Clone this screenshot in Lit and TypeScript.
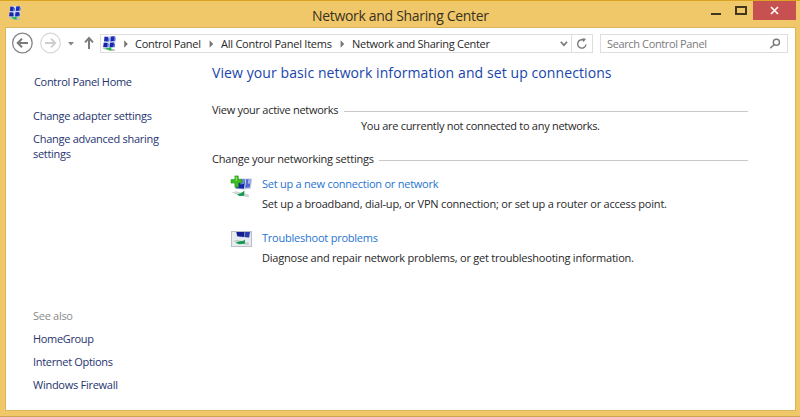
import { LitElement, html, svg, css } from "lit";
import { customElement, property } from "lit/decorators.js";

/** One line of text whose tracking is adjusted so that it spans a given width. */
@customElement("ui-text")
class UiText extends LitElement {
  @property({ type: Number }) span = 0;
  @property() text = "";
  static styles = css`
    :host { display: block; flex: none; white-space: nowrap; }
    .run { display: inline-block; }
  `;
  firstUpdated() {
    const run = this.renderRoot.querySelector(".run") as HTMLElement;
    const natural = run.getBoundingClientRect().width;
    run.style.letterSpacing = (this.span - natural) / (this.text.length - 1) + "px";
    this.style.width = this.span + "px";
  }
  render() {
    return html`<span class="run">${this.text}</span>`;
  }
}

const t = (text: string, span: number, cls = "") =>
  html`<ui-text class=${cls} .text=${text} .span=${span}></ui-text>`;

const networkIcon = svg`
  <path d="M2.4 .3 12.9 .2 12.2 11 1 11.2Z" fill="#cdd8f3"/>
  <path d="M2.3 .6 5.9 .9 5.4 5.2 1.9 4.9Z" fill="#1d2cb4"/>
  <path d="M8.2 .5 11.9 .3 11.4 4.8 7.8 5.1Z" fill="#1d2cb4"/>
  <path d="M1.6 6.3 5.4 6.6 4.9 10.6 1.1 10.2Z" fill="#1624a8"/>
  <path d="M7.5 6.3 11.3 6 10.8 10.2 7 10.6Z" fill="#1a29b0"/>
  <path d="M5.9 2 7 2 6.6 5.1 5.6 5ZM11.7 1.8 12.8 1.6 12.3 4.8 11.4 4.8ZM5.3 7.6 6.3 7.5 5.9 10.6 5 10.5ZM11.1 7.3 12.2 7.2 11.7 10.3 10.8 10.2Z" fill="#4a62d2"/>
  <path d="M0 11.3 4 11.3 12.2 12.6 11.8 14 8 14 2.8 12.7Z" fill="#b5c2b9"/>
  <path d="M3 11.6 6 11.2 8.6 10.2 8.8 13.6 6.2 13.2Z" fill="#1fb84a"/>`;

@customElement("app-root")
class AppRoot extends LitElement {
  static styles = css`
    :host {
      display: block; width: 800px; height: 417px; box-sizing: border-box;
      font: 11px/16px "Open Sans", "Noto Sans", sans-serif; color: #282828;
      background: #f0c869; border-top: 1px solid #d9a520; border-bottom: 1px solid #c9a650;
      overflow: hidden;
    }
    svg { display: block; flex: none; }
    .titlebar { display: grid; grid-template-columns: 312px 177px 1fr; height: 26px; }
    .app-icon { margin: 5px 0 0 8px; }
    .title { font-size: 14px; line-height: 20px; margin-top: 5px; color: #3a3120; }
    .buttons { display: flex; justify-content: flex-end; padding-right: 4px; }
    .min { width: 10px; height: 2px; background: #40371f; margin: 12px 14px 0 0; }
    .max { width: 8px; height: 5px; border: 2px solid #40371f; margin: 5px 6px 0 0; }
    .close { width: 43px; height: 19px; background: #c75050; display: flex; justify-content: center; align-items: center; }
    .window {
      width: 789px; height: 382px; margin-left: 5px; background: #fff; border: 1px solid #dcb65d;
      box-sizing: content-box; overflow: hidden;
    }
    .nav { display: flex; height: 19px; margin-top: 6px; }
    .history { width: 94px; margin-top: -2px; height: 22px; }
    .address {
      box-sizing: border-box; width: 493px; height: 19px; border: 1px solid #dedede;
      display: flex; align-items: center;
    }
    .address .pic { margin-left: 1px; }
    .arrow { width: 20px; }
    .chev { margin-left: auto; width: 20px; }
    .refresh { width: 20px; height: 17px; border-left: 1px solid #dedede; display: flex; align-items: center; justify-content: center; }
    .search {
      box-sizing: border-box; width: 188px; height: 19px; border: 1px solid #dedede; margin-left: 7px;
      display: flex; justify-content: space-between; align-items: center; padding: 0 6px; color: #7a7a7a;
    }
    .body { display: grid; grid-template-columns: 179px 536px; column-gap: 27px; height: 356px; }
    .side { display: flex; flex-direction: column; padding: 21px 0 0 27px; color: #26346e; }
    .side .home { margin-left: 1px; }
    .gap-home { margin-top: 18px; }
    .gap { margin-top: 7px; }
    .wrap { margin-top: -1px; }
    .also { margin-top: 146px; color: #8a8a8a; }
    .main { padding-top: 10px; }
    .heading { font-size: 14px; line-height: 20px; color: #1745ad; }
    .section { display: flex; gap: 5px; align-items: center; height: 16px; }
    .section.first { margin-top: 19px; }
    .section.second { margin-top: 17px; }
    .rule { flex: 1; height: 1px; background: #c9c9c9; margin-top: 2px; }
    .status { margin-left: 149px; }
    .task { display: grid; grid-template-columns: 50px 1fr; height: 54px; }
    .task.first { margin-top: 9px; }
    .task-icon { margin: -1px 0 0 18px; }
    .link { color: #1f74d0; margin-bottom: 4px; }
  `;

  renderHistory() {
    return html`<svg class="history" width="94" height="22" viewBox="0 0 94 22" fill="none">
      <circle cx="16.4" cy="11" r="9.8" stroke="#858585" stroke-width="1.3"/>
      <path d="M22 11H12M16 6.7 11.7 11 16 15.3" stroke="#7a7a7a" stroke-width="2"/>
      <circle cx="44.5" cy="11" r="9.8" stroke="#d6d6d6" stroke-width="1.2"/>
      <path d="M39 11H49M45 6.7 49.3 11 45 15.3" stroke="#cecece" stroke-width="1.8"/>
      <path d="M62 10H68L65 13.4Z" fill="#858585"/>
      <path d="M83 17V6.5M79 10.4 83 6 87 10.4" stroke="#7c7c7c" stroke-width="2"/>
    </svg>`;
  }

  renderArrow() {
    return html`<svg class="arrow" width="20" height="10" viewBox="0 0 20 10"><path d="M8.6 1.3 12.2 5 8.6 8.7Z" fill="#757575"/></svg>`;
  }

  renderConnectionIcon() {
    return html`<svg class="task-icon" width="23" height="24" viewBox="0 0 23 24">
      <path d="M13 3.6 22.3 3.6 20.8 13.8 13 14.4Z" fill="#c3cee6"/>
      <path d="M15.5 4.3 20.9 4.3 19.7 12.4 15 12.8Z" fill="#5368cc"/>
      <path d="M18.4 4.3 20.9 4.3 20.3 8.5 17.8 8.7Z" fill="#a9b8ea"/>
      <path d="M6 4 16.2 3.6 14.9 14.6 5 14.2Z" fill="#dbe3ee"/>
      <path d="M6.6 4.8 15.2 4.4 14 13.8 5.8 13.2Z" fill="#1425a8"/>
      <path d="M10.8 4.6 15.2 4.4 14.6 8.8 10.3 9.6Z" fill="#6d84de"/>
      <path d="M1.5 17.6 6 16.2 19 19.6 18.6 22.6 13.5 21.2 7 19.6Z" fill="#cfd6d4"/>
      <path d="M7 19.4 10.6 18.2 14.4 15.8 14.2 20.8 9.4 21Z" fill="#149b51"/>
      <path d="M4.9 .9H8.3V4.3H11.9V7.9H8.5V12.2H4.9V8.1H1V4.5H4.9Z" fill="#3abc23" stroke="#249417" stroke-width=".6"/>
      <path d="M5.7 1.8H7.1V6H5.7Z" fill="#86e25d"/>
    </svg>`;
  }

  renderTroubleshootIcon() {
    return html`<svg class="task-icon" width="23" height="20" viewBox="0 0 23 20">
      <rect x="1.5" y="2.5" width="20" height="15" fill="#e9ecef" stroke="#b9bfc6"/>
      <path d="M6 3 20.8 3 19.6 9 6.8 8Z" fill="#c4cee6"/>
      <path d="M6.3 3H14.6L14.1 7.9 7.4 7.2Z" fill="#131f90"/>
      <path d="M15.2 3H20L19 8.4 14.7 8Z" fill="#2b3ea9"/>
      <path d="M2.6 12 7 10.8 19 14 18.4 16.2 12 14.8Z" fill="#c3cbca"/>
      <path d="M5.4 13.8 10 12.2 13.2 11.8 15 10.8 14.8 14.8 9 15.2Z" fill="#179953"/>
    </svg>`;
  }

  render() {
    return html`
      <div class="titlebar">
        <svg class="app-icon" width="14" height="15" viewBox="0 0 14 15">${networkIcon}</svg>
        ${t("Network and Sharing Center", 177, "title")}
        <div class="buttons">
          <div class="min"></div><div class="max"></div>
          <div class="close"><svg width="9" height="9" viewBox="0 0 9 9"><path d="M1 1 8 8M8 1 1 8" stroke="#fff" stroke-width="1.6"/></svg></div>
        </div>
      </div>
      <div class="window">
        <div class="nav">
          ${this.renderHistory()}
          <div class="address">
            <svg class="pic" width="15" height="16" viewBox="0 0 14 15">${networkIcon}</svg>
            <svg width="18" height="10" viewBox="0 0 18 10"><path d="M7.2 1.3 10.8 5 7.2 8.7Z" fill="#757575"/></svg>
            ${t("Control Panel", 66)} ${this.renderArrow()}
            ${t("All Control Panel Items", 111)} ${this.renderArrow()}
            ${t("Network and Sharing Center", 138)}
            <svg class="chev" width="20" height="10" viewBox="0 0 20 10"><path d="M9.8 2.8 12.9 6.3 16 2.8" fill="none" stroke="#757575" stroke-width="1.6"/></svg>
            <div class="refresh"><svg width="12" height="12" viewBox="0 0 12 12"><path d="M7.8 2.2A4.2 4.2 0 1 0 10 6.5" fill="none" stroke="#7a7a7a" stroke-width="1.4"/><path d="M6 .2 10 .8 7.5 4.3Z" fill="#7a7a7a"/></svg></div>
          </div>
          <div class="search">
            ${t("Search Control Panel", 100)}
            <svg width="12" height="12" viewBox="0 0 12 12" fill="none" stroke="#777" stroke-width="1.4"><circle cx="7.4" cy="4.3" r="3.1"/><path d="M5.2 6.6 1.3 10.3"/></svg>
          </div>
        </div>
        <div class="body">
          <div class="side">
            ${t("Control Panel Home", 98, "home")}
            ${t("Change adapter settings", 119, "gap-home")}
            ${t("Change advanced sharing", 126, "gap")}
            ${t("settings", 38, "wrap")}
            ${t("See also", 40, "also")}
            ${t("HomeGroup", 61, "gap")}
            ${t("Internet Options", 80, "gap")}
            ${t("Windows Firewall", 85, "gap")}
          </div>
          <div class="main">
            ${t("View your basic network information and set up connections", 399.5, "heading")}
            <div class="section first">${t("View your active networks", 126.5)}<div class="rule"></div></div>
            ${t("You are currently not connected to any networks.", 239, "status")}
            <div class="section second">${t("Change your networking settings", 162)}<div class="rule"></div></div>
            <div class="task first">
              ${this.renderConnectionIcon()}
              <div>${t("Set up a new connection or network", 176.5, "link")}
              ${t("Set up a broadband, dial-up, or VPN connection; or set up a router or access point.", 405)}</div>
            </div>
            <div class="task">
              ${this.renderTroubleshootIcon()}
              <div>${t("Troubleshoot problems", 116, "link")}
              ${t("Diagnose and repair network problems, or get troubleshooting information.", 372)}</div>
            </div>
          </div>
        </div>
      </div>`;
  }
}
